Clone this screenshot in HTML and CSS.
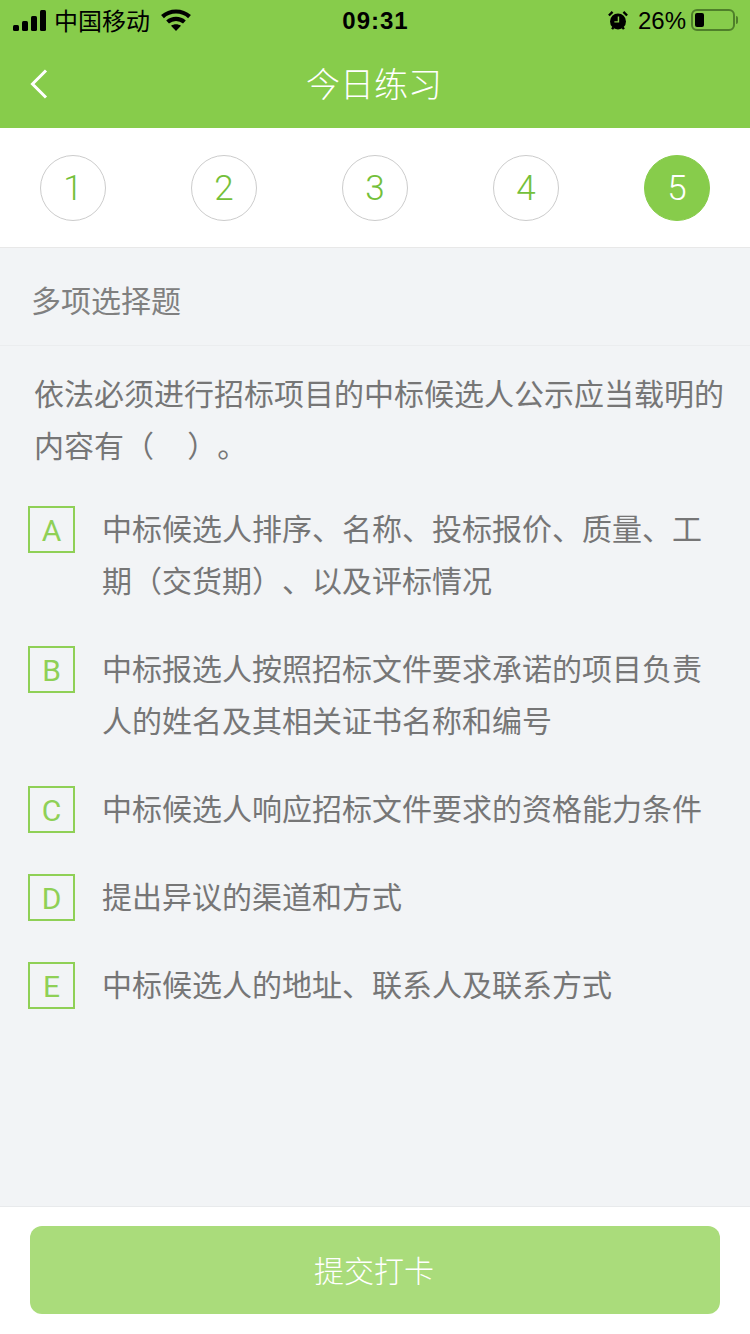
FILE: index.html
```html
<!DOCTYPE html>
<html lang="zh-CN">
  <head>
    <meta charset="UTF-8" />
    <meta name="viewport" content="width=device-width, initial-scale=1.0" />
    <title>今日练习</title>
    <link rel="stylesheet" href="styles.css">
  </head>
  <body>
    <div class="page">
      <header class="header">
        <div class="status-bar">
          <div class="status-left">
            <svg class="signal" width="33" height="21" viewBox="0 0 33 21" fill="#000">
              <rect x="0" y="15" width="6" height="6" rx="1.5" />
              <rect x="9" y="11" width="6" height="10" rx="1.5" />
              <rect x="18" y="6" width="6" height="15" rx="1.5" />
              <rect x="27" y="0" width="6" height="21" rx="1.5" />
            </svg>
            <span class="carrier">中国移动</span>
            <svg class="wifi" width="30" height="22" viewBox="0 0 30 22" fill="none" stroke="#000" stroke-width="4.2">
              <path d="M1.5 7.6C9 0.8 21 0.8 28.5 7.6" />
              <path d="M6.6 13C11.4 8.8 18.6 8.8 23.4 13" />
              <path d="M15 22L10 16.8C13 14.8 17 14.8 20 16.8Z" fill="#000" stroke="none" />
            </svg>
          </div>
          <div class="status-time">09:31</div>
          <div class="status-right">
            <svg class="alarm" width="20" height="21" viewBox="0 0 22 22">
              <circle cx="11" cy="12" r="8.8" fill="#000" />
              <path d="M1 5.5L5 1.5M21 5.5L17 1.5M4.5 20.5L6 18.5M17.5 20.5L16 18.5" stroke="#000" stroke-width="2.6" fill="none" />
              <path d="M11.5 6.5V12.5H7" stroke="#87cc4b" stroke-width="1.6" fill="none" />
            </svg>
            <span class="battery-pct">26%</span>
            <span class="battery"><span class="battery-level"></span></span>
            <span class="battery-cap"></span>
          </div>
        </div>
        <div class="nav-bar">
          <svg class="back" width="18" height="30" viewBox="0 0 18 30" fill="none" stroke="#fff" stroke-width="3">
            <path d="M16 1.5L2.5 15L16 28.5" />
          </svg>
          <h1 class="nav-title">今日练习</h1>
          <span></span>
        </div>
      </header>

      <div class="steps">
        <span class="step">1</span>
        <span class="step">2</span>
        <span class="step">3</span>
        <span class="step">4</span>
        <span class="step step-active">5</span>
      </div>

      <main class="content">
        <div class="section-title">多项选择题</div>
        <p class="question">依法必须进行招标项目的中标候选人公示应当载明的内容有（&nbsp;&nbsp;&nbsp;&nbsp;）。</p>
        <ul class="options">
          <li class="option">
            <span class="option-key">A</span>
            <span class="option-text">中标候选人排序、名称、投标报价、质量、工期（交货期）、以及评标情况</span>
          </li>
          <li class="option">
            <span class="option-key">B</span>
            <span class="option-text">中标报选人按照招标文件要求承诺的项目负责人的姓名及其相关证书名称和编号</span>
          </li>
          <li class="option">
            <span class="option-key">C</span>
            <span class="option-text">中标候选人响应招标文件要求的资格能力条件</span>
          </li>
          <li class="option">
            <span class="option-key">D</span>
            <span class="option-text">提出异议的渠道和方式</span>
          </li>
          <li class="option">
            <span class="option-key">E</span>
            <span class="option-text">中标候选人的地址、联系人及联系方式</span>
          </li>
        </ul>
      </main>

      <footer class="footer">
        <button class="submit">提交打卡</button>
      </footer>
    </div>
  </body>
</html>
```

FILE: styles.css
```css
* {
  box-sizing: border-box;
}

body {
  font-family: "Liberation Sans", "Noto Sans CJK SC", sans-serif;
  background-color: #f2f4f6;
  color: #767676;
  margin: 0;
  padding: 0;
  text-spacing-trim: space-all;
}

.page {
  width: 750px;
  height: 1334px;
  display: flex;
  flex-direction: column;
  overflow: hidden;
}

/* Header */
.header {
  background-color: #87cc4b;
  height: 128px;
  flex-shrink: 0;
}

.status-bar {
  height: 40px;
  display: flex;
  align-items: center;
  color: #000;
}

.status-left {
  flex: 1;
  display: flex;
  align-items: center;
  padding-left: 13px;
}

.carrier {
  font-size: 24px;
  margin-left: 8px;
  padding-bottom: 2px;
}

.wifi {
  margin-left: 11px;
}

.status-time {
  font-size: 24px;
  font-weight: 700;
  letter-spacing: 1px;
  padding-top: 2px;
}

.status-right {
  flex: 1;
  display: flex;
  align-items: center;
  justify-content: flex-end;
  padding-right: 12px;
}

.battery-pct {
  font-size: 24px;
  margin-left: 10px;
  padding-top: 2px;
}

.battery {
  width: 44px;
  height: 22px;
  margin-left: 5px;
  padding: 2px;
  border: 2px solid #4f7f2a;
  border-radius: 6px;
  display: flex;
}

.battery-level {
  width: 9px;
  background-color: #000;
  border-radius: 2px;
}

.battery-cap {
  width: 2px;
  height: 8px;
  margin-left: 1px;
  background-color: #4f7f2a;
  border-radius: 0 2px 2px 0;
}

.nav-bar {
  height: 88px;
  padding: 0 30px;
  display: grid;
  grid-template-columns: 1fr auto 1fr;
  align-items: center;
}

.nav-title {
  margin: 0;
  padding: 0 2px 4px 0;
  color: #fff;
  font-size: 34px;
  font-weight: 300;
}

/* Steps */
.steps {
  height: 120px;
  padding: 27px 40px 0;
  background-color: #fff;
  border-bottom: 1px solid #e8e8e8;
  display: flex;
  justify-content: space-between;
  align-items: flex-start;
  flex-shrink: 0;
}

.step {
  width: 66px;
  height: 66px;
  border: 1px solid #ccc;
  border-radius: 50%;
  color: #74c03a;
  font-family: Roboto, sans-serif;
  font-size: 35px;
  font-weight: 300;
  display: flex;
  align-items: center;
  justify-content: center;
}

.step-active {
  background-color: #87cc4b;
  border-color: #87cc4b;
  color: #fff;
}

/* Question */
.content {
  flex-grow: 1;
}

.section-title {
  height: 98px;
  padding: 0 31px;
  border-bottom: 1px solid #ebedef;
  font-size: 30px;
  line-height: 107px;
  color: #808080;
}

.question {
  margin: 23px 0 0;
  padding: 0 20px 0 34px;
  font-size: 30px;
  line-height: 52px;
}

.options {
  list-style: none;
  margin: 31px 0 0;
  padding: 0 20px 0 28px;
}

.option {
  display: flex;
  align-items: flex-start;
  min-height: 52px;
  margin-bottom: 36px;
}

.option-key {
  width: 47px;
  height: 47px;
  margin-top: 2px;
  padding-top: 2px;
  border: 2px solid #8fd056;
  color: #8fd056;
  font-family: Roboto, sans-serif;
  font-size: 30px;
  display: flex;
  align-items: center;
  justify-content: center;
  flex-shrink: 0;
}

.option-text {
  margin-left: 27px;
  font-size: 30px;
  line-height: 52px;
}

/* Footer */
.footer {
  height: 128px;
  padding: 19px 30px 0;
  background-color: #fff;
  border-top: 1px solid #e8eaec;
  flex-shrink: 0;
}

.submit {
  width: 100%;
  height: 88px;
  padding: 0 2px 3px 0;
  border: none;
  border-radius: 12px;
  background-color: #aadc7b;
  color: #fff;
  font-family: inherit;
  font-size: 30px;
  font-weight: 300;
}
```
